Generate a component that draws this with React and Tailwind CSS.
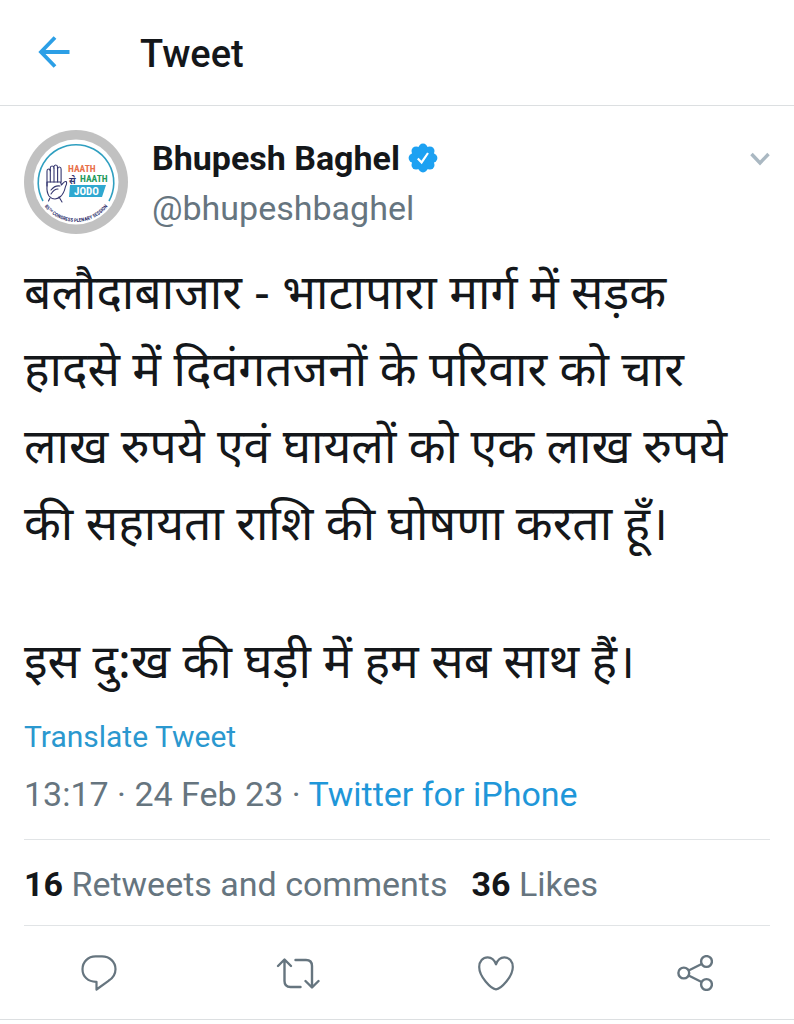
import { useState } from 'react'

const tweet = {
    name: 'Bhupesh Baghel',
    handle: '@bhupeshbaghel',
    paragraphs: [
        'बलौदाबाजार - भाटापारा मार्ग में सड़क हादसे में दिवंगतजनों के परिवार को चार लाख रुपये एवं घायलों को एक लाख रुपये की सहायता राशि की घोषणा करता हूँ।',
        'इस दु:ख की घड़ी में हम सब साथ हैं।'
    ],
    time: '13:17',
    date: '24 Feb 23',
    source: 'Twitter for iPhone',
    retweets: 16,
    likes: 36
}

function BackIcon() {
    return (
        <svg viewBox="0 0 32 32" className="size-8" fill="none" stroke="currentColor" strokeWidth="3.8">
            <path d="M31.5 16H3M17 1.5L3 16l14 14.5" />
        </svg>
    )
}

function VerifiedIcon() {
    return (
        <svg viewBox="0 0 30 30" className="size-[30px] shrink-0" aria-label="Verified">
            <g fill="#1da1f2">
                <circle cx="15" cy="15" r="12" />
                <circle cx="15" cy="5.2" r="4.6" />
                <circle cx="21.9" cy="8.1" r="4.6" />
                <circle cx="24.8" cy="15" r="4.6" />
                <circle cx="21.9" cy="21.9" r="4.6" />
                <circle cx="15" cy="24.8" r="4.6" />
                <circle cx="8.1" cy="21.9" r="4.6" />
                <circle cx="5.2" cy="15" r="4.6" />
                <circle cx="8.1" cy="8.1" r="4.6" />
            </g>
            <path d="M9.8 15.4l3.8 4 6.4-9.4" fill="none" stroke="#fff" strokeWidth="2.2" />
        </svg>
    )
}

function Avatar() {
    return (
        <svg viewBox="0 0 104 104" className="size-[104px] shrink-0" role="img" aria-label="Haath se Haath Jodo">
            <defs>
                <path id="ring" d="M16.500 70a39.700 39.700 0 0 0 71 0" />
            </defs>
            <circle cx="52" cy="52" r="52" fill="#c1c1c1" />
            <circle cx="52" cy="52" r="42.5" fill="#fff" />
            <path d="M19 71a37.800 37.800 0 1 1 66 0" fill="none" stroke="#2f9fc0" strokeWidth="1.6" />
            {/* hand */}
            <g fill="none" stroke="#34356f" strokeWidth="1.1" strokeLinecap="round" strokeLinejoin="round">
                <path d="M23 56V41q0-2 1.500-2t1.800 2v-3q0-2 1.800-2t1.800 2v-1q0-2 1.800-2t1.800 2v2q0-2 1.800-2t1.800 2v13" />
                <path d="M26.300 40v12M30 38v14M33.600 38v14" />
                <path d="M23 52h13.500l1 3q3-4 4.500-3.500 1.500 1-.5 5-1.500 7-5 10-2 2-5.500 2.500-3.500 0-6-3-2.500-4-2-10z" />
                <path d="M27 60q4-5 9-4M27 64q3-5 7-5M26 68l-1.500 3M35 67l3 5" />
            </g>
            <g fontFamily="'Liberation Sans Narrow', 'Roboto Condensed', 'Liberation Sans', sans-serif" fontWeight="700">
                <text x="44" y="42" fontSize="9.5" fill="#e8704a">HAATH</text>
                <text x="45" y="54" fontSize="9" fill="#34356f" fontFamily="'Noto Sans', sans-serif">से</text>
                <text x="56" y="52" fontSize="9.5" fill="#249a5b">HAATH</text>
                <path d="M46 55h36l-4 12H45z" fill="#2fa8d0" />
                <text x="50" y="65" fontSize="11" fill="#fff">JODO</text>
                <text fontSize="5" fill="#34356f" textAnchor="middle">
                    <textPath href="#ring" startOffset="50%">85ᵀᴴ CONGRESS PLENARY SESSION</textPath>
                </text>
            </g>
        </svg>
    )
}

function ReplyIcon() {
    return (
        <svg viewBox="0 0 36 36" className="size-9" fill="none" stroke="currentColor" strokeWidth="2.2" strokeLinejoin="round">
            <path d="M14.5 1.4h6.500C28.800 1.400 34.500 7 34.500 14.200c0 5-2.800 9-7 11.600L15.500 34.500v-7.700C7 27 1.500 21.500 1.500 14.200 1.500 7 7 1.400 14.500 1.400z" />
        </svg>
    )
}

function RetweetIcon() {
    return (
        <svg viewBox="0 0 44 32" className="h-8 w-11" fill="none" stroke="currentColor" strokeWidth="2.4" strokeLinecap="round" strokeLinejoin="round">
            <path d="M2 9L8.500 2.500 15 9M8.500 3v21q0 6 6 6h10" />
            <path d="M19.500 3H30q6 0 6 6v20.500M29.500 24L36 30.500l6.500-6.500" />
        </svg>
    )
}

function LikeIcon() {
    return (
        <svg viewBox="0 0 36 36" className="size-9" fill="none" stroke="currentColor" strokeWidth="2.2" strokeLinejoin="round" strokeLinecap="round">
            <path d="M18 9.300C16.300 4.600 13 2.300 9.700 2.300 4.800 2.300 1.200 6.500 1.200 12c0 9.500 11.500 21.800 16.800 22.300C23.300 33.800 34.800 21.500 34.800 12c0-5.500-3.600-9.700-8.500-9.700-3.300 0-6.600 2.300-8.300 7z" />
        </svg>
    )
}

function ShareIcon() {
    return (
        <svg viewBox="0 0 36 36" className="size-9" fill="none" stroke="currentColor" strokeWidth="2.4">
            <circle cx="6.8" cy="18" r="5.4" />
            <circle cx="29.5" cy="6.5" r="5.4" />
            <circle cx="29.5" cy="29.5" r="5.4" />
            <path d="M11.6 15.500l13-6.500M11.600 20.500l13 6.500" />
        </svg>
    )
}

function App() {
    const [liked, setLiked] = useState(false)

    return (
        <div className="min-h-screen bg-white font-['Roboto','Noto_Sans',sans-serif] text-[#14171a]">
            {/* Header */}
            <header className="flex items-start gap-[70px] border-b border-[#dcdfe1] px-[38px] pt-7 pb-[25px]">
                <button aria-label="Back" className="flex h-12 items-center text-[#2c9fe6]">
                    <BackIcon />
                </button>
                <h1 className="text-[38px] leading-[52px] font-medium">Tweet</h1>
            </header>

            <article className="border-b border-[#dcdfe1] px-6 pt-6">
                {/* Author */}
                <div className="flex gap-6">
                    <Avatar />
                    <div className="flex-1 pt-[3px]">
                        <div className="flex items-center gap-2">
                            <span className="text-[34px] leading-[50px] font-bold">{tweet.name}</span>
                            <VerifiedIcon />
                        </div>
                        <div className="text-[34px] leading-[50px] text-[#66757f]">{tweet.handle}</div>
                    </div>
                    <button aria-label="More" className="h-[58px] text-[#aab8c2]">
                        <svg viewBox="0 0 20 14" className="h-[14px] w-5" fill="none" stroke="currentColor" strokeWidth="3.4">
                            <path d="M1.5 2L10 11l8.500-9" />
                        </svg>
                    </button>
                </div>

                {/* Text */}
                <div className="space-y-[61px] pt-[18px] font-['Noto_Sans','Noto_Sans_Devanagari',sans-serif] text-[48px] leading-[77px]">
                    {tweet.paragraphs.map(p => (
                        <p key={p}>{p}</p>
                    ))}
                </div>

                <a href="#translate" className="mt-[19px] block text-[30px] leading-[40px] text-[#2b98cf]">
                    Translate Tweet
                </a>

                <div className="pt-[13px] pb-[21px] text-[34px] leading-[48px] text-[#66757f]">
                    {tweet.time} · {tweet.date} ·{' '}
                    <a href="#source" className="text-[#1f97d9]">{tweet.source}</a>
                </div>

                {/* Counters */}
                <div className="flex gap-6 border-y border-[#e1e4e6] pt-[19px] pb-4 text-[34px] leading-[50px] text-[#66757f]">
                    <span><b className="text-[#14171a]">{tweet.retweets}</b> Retweets and comments</span>
                    <span><b className="text-[#14171a]">{tweet.likes}</b> Likes</span>
                </div>

                {/* Actions */}
                <div className="-mx-6 grid h-[93px] grid-cols-4 items-center justify-items-center text-[#66757f]">
                    <button aria-label="Reply"><ReplyIcon /></button>
                    <button aria-label="Retweet"><RetweetIcon /></button>
                    <button aria-label="Like" aria-pressed={liked} onClick={() => setLiked(!liked)}>
                        <LikeIcon />
                    </button>
                    <button aria-label="Share"><ShareIcon /></button>
                </div>
            </article>
        </div>
    )
}

export default App
